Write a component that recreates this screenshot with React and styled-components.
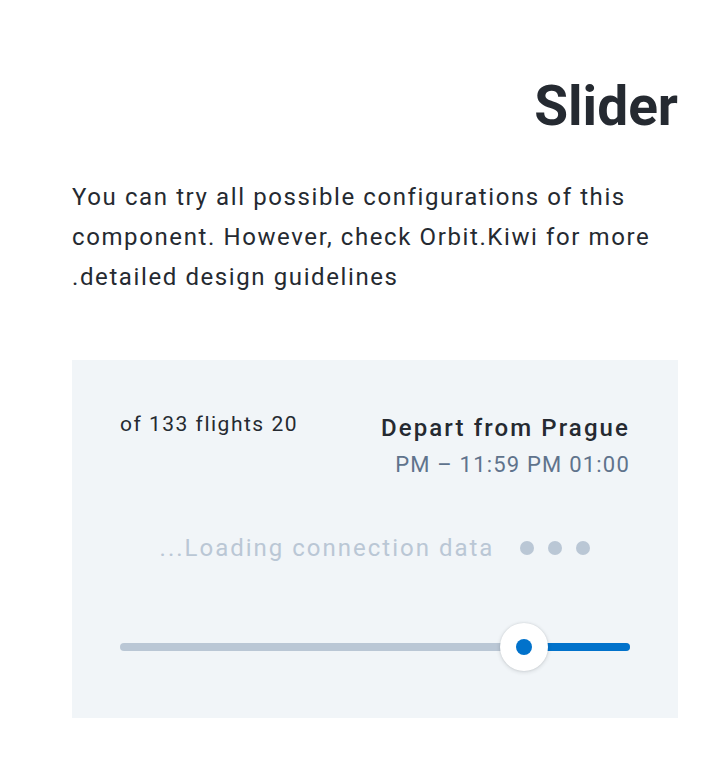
import React from "react";
import styled, { createGlobalStyle } from "styled-components";

const GlobalStyle = createGlobalStyle`
  html, body {
    margin: 0;
    padding: 0;
    background: #ffffff;
  }
  body {
    font-family: Roboto, "Noto Sans", "Liberation Sans", sans-serif;
    color: #252a31;
  }
`;

const Page = styled.main`
  direction: rtl;
  padding: 72px 40px 40px 72px;
`;

const Title = styled.h1`
  margin: 0;
  font-size: 55px;
  line-height: 68px;
  font-weight: 700;
  color: #252a31;
`;

const Intro = styled.p`
  margin: 37px 0 63px;
  font-size: 24px;
  line-height: 40px;
  letter-spacing: 1.6px;
  text-align: left;
  color: #252a31;
`;

const Card = styled.section`
  background: #f1f5f8;
  padding: 49px 48px 47px;
`;

const Header = styled.div`
  display: flex;
  justify-content: space-between;
  align-items: flex-start;
`;

const Label = styled.div`
  display: flex;
  flex-direction: column;
  gap: 3px;
  padding-top: 1px;
`;

const LabelTitle = styled.span`
  font-size: 24px;
  line-height: 36px;
  font-weight: 500;
  letter-spacing: 2.1px;
  color: #252a31;
`;

const LabelValue = styled.span`
  font-size: 22px;
  line-height: 32px;
  letter-spacing: 1.2px;
  color: #5f738c;
`;

const Count = styled.span`
  font-size: 21px;
  line-height: 30px;
  letter-spacing: 1.5px;
  color: #252a31;
`;

const Loading = styled.div`
  display: flex;
  justify-content: center;
  align-items: center;
  gap: 26px;
  margin-top: 49px;
  height: 36px;
`;

const LoadingText = styled.span`
  font-size: 24px;
  line-height: 36px;
  letter-spacing: 2px;
  color: #bac7d5;
`;

const Dots = styled.span`
  display: flex;
  gap: 14px;
`;

const Dot = styled.span`
  width: 14px;
  height: 14px;
  border-radius: 50%;
  background: #bac7d5;
`;

const SliderWrap = styled.div`
  position: relative;
  margin-top: 57px;
  height: 48px;
  display: flex;
  align-items: center;
`;

const Track = styled.div`
  position: relative;
  width: 100%;
  height: 8px;
  border-radius: 4px;
  background: #bac7d5;
`;

const Fill = styled.div`
  position: absolute;
  top: 0;
  right: 0;
  height: 100%;
  border-radius: 4px;
  background: #0172cb;
`;

const Handle = styled.div`
  position: absolute;
  top: 50%;
  width: 48px;
  height: 48px;
  margin-top: -24px;
  margin-right: -24px;
  border-radius: 50%;
  background: #ffffff;
  box-shadow: 0 1px 4px rgba(37, 42, 49, 0.16), 0 0 2px rgba(37, 42, 49, 0.12);
  display: flex;
  align-items: center;
  justify-content: center;

  &::after {
    content: "";
    width: 16px;
    height: 16px;
    border-radius: 50%;
    background: #0172cb;
  }
`;

export default function App() {
  const fill = (106 / 510) * 100;
  return (
    <>
      <GlobalStyle />
      <Page>
        <Title>Slider</Title>
        <Intro>
          You can try all possible configurations of this component. However,
          check Orbit.Kiwi for more detailed design guidelines.
        </Intro>
        <Card>
          <Header>
            <Label>
              <LabelTitle>Depart from Prague</LabelTitle>
              <LabelValue>01:00 PM – 11:59 PM</LabelValue>
            </Label>
            <Count>20 of 133 flights</Count>
          </Header>
          <Loading>
            <Dots>
              <Dot />
              <Dot />
              <Dot />
            </Dots>
            <LoadingText>Loading connection data...</LoadingText>
          </Loading>
          <SliderWrap>
            <Track>
              <Fill style={{ width: `${fill}%` }} />
              <Handle style={{ right: `${fill}%` }} />
            </Track>
          </SliderWrap>
        </Card>
      </Page>
    </>
  );
}
